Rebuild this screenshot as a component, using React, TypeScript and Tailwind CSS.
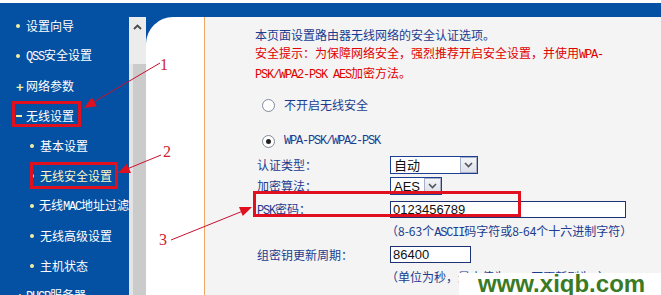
import type { ReactNode } from 'react';

// ASCII runs in the old router UI are drawn in a narrow monospace face
function M({ children }: { children: ReactNode }) {
  return <span className="font-['Liberation_Mono',monospace] text-[12px] tracking-[-1.2px]">{children}</span>;
}

type MenuItem = { mark: 'dot' | 'plus' | 'minus'; level: 0 | 1; text: ReactNode; active?: boolean };

const menu: MenuItem[] = [
  { mark: 'dot', level: 0, text: '设置向导' },
  { mark: 'dot', level: 0, text: <><M>QSS</M>安全设置</> },
  { mark: 'plus', level: 0, text: '网络参数' },
  { mark: 'minus', level: 0, text: '无线设置' },
  { mark: 'dot', level: 1, text: '基本设置' },
  { mark: 'dot', level: 1, text: '无线安全设置', active: true },
  { mark: 'dot', level: 1, text: <>无线<M>MAC</M>地址过滤</> },
  { mark: 'dot', level: 1, text: '无线高级设置' },
  { mark: 'dot', level: 1, text: '主机状态' },
  { mark: 'plus', level: 0, text: <><M>DHCP</M>服务器</> },
];

function Mark({ kind }: { kind: MenuItem['mark'] }) {
  if (kind === 'plus') return <span className="w-[10px] text-[13px] font-bold text-[#f3eea0] leading-none">+</span>;
  if (kind === 'minus') return <span className="w-[10px] flex items-center"><span className="w-[6px] h-[2px] bg-[#f3eea0]" /></span>;
  return (
    <span className="w-[10px] flex items-center">
      <span className="w-[4px] h-[4px] rounded-full bg-[#f3eea0]" />
    </span>
  );
}

function Sidebar() {
  return (
    <div className="w-[129px] shrink-0 bg-[#0450a2] overflow-hidden pt-[8px] pl-[16px]">
      {menu.map((item, i) => (
        <div
          key={i}
          className={`h-[30px] flex items-center whitespace-nowrap ${item.level === 1 ? 'pl-[14px]' : ''} ${item.active ? 'text-[#fff6c4]' : 'text-white'}`}
        >
          <Mark kind={item.mark} />
          <span className="text-[12px] leading-[14px]">{item.text}</span>
        </div>
      ))}
    </div>
  );
}

function Radio({ checked }: { checked?: boolean }) {
  return (
    <span className="w-[13px] h-[13px] rounded-full border border-[#7f8a9a] bg-white flex items-center justify-center">
      {checked && <span className="w-[5px] h-[5px] rounded-full bg-[#222]" />}
    </span>
  );
}

function Select({ value, width }: { value: string; width: string }) {
  return (
    <div className={`${width} h-[18px] border border-[#1c3f94] bg-white flex items-center justify-between`}>
      <span className="pl-[3px] text-[13px] leading-none text-[#111] font-['Liberation_Sans','Noto_Sans_CJK_SC',sans-serif]">{value}</span>
      <span className="w-[17px] h-[16px] border border-[#a6b0c8] bg-gradient-to-b from-[#f4f5f8] to-[#dde0e8] flex items-center justify-center">
        <svg width="9" height="6" viewBox="0 0 9 6">
          <path d="M1 1 L4.5 4.5 L8 1" fill="none" stroke="#4d5460" strokeWidth="1.6" />
        </svg>
      </span>
    </div>
  );
}

function Input({ value, width }: { value: string; width: string }) {
  return (
    <div className={`${width} h-[17px] border border-[#1c3272] bg-white flex items-center pl-[2px]`}>
      <span className="text-[13px] leading-none text-[#111] font-['Liberation_Sans',sans-serif]">{value}</span>
    </div>
  );
}

function Row({ label, children, className }: { label: ReactNode; children: ReactNode; className: string }) {
  return (
    <div className={`flex items-center ${className}`}>
      <span className="w-[135px] pl-[2px] text-[#1b3c8f]">{label}</span>
      {children}
    </div>
  );
}

function Content() {
  return (
    <div className="flex-1 bg-[#f4f4f4] pl-[50px] pt-[9px] text-[12px] leading-[18px] whitespace-nowrap">
      <p className="text-[#1b3c8f]">本页面设置路由器无线网络的安全认证选项。</p>
      <p className="text-[#e00000]">安全提示：为保障网络安全，强烈推荐开启安全设置，并使用<M>WPA-</M></p>
      <p className="text-[#e00000]"><M>PSK/WPA2-PSK AES</M>加密方法。</p>

      <div className="flex items-center h-[18px] mt-[12px] pl-[7px] gap-[9px] text-[#1b3c8f]">
        <Radio />
        <span>不开启无线安全</span>
      </div>
      <div className="flex items-center h-[18px] mt-[18px] pl-[7px] gap-[9px] text-[#1b3c8f]">
        <Radio checked />
        <M>WPA-PSK/WPA2-PSK</M>
      </div>

      <Row label="认证类型：" className="mt-[6px] h-[18px]">
        <Select value="自动" width="w-[88px]" />
      </Row>
      <Row label="加密算法：" className="mt-[3px] h-[18px]">
        <Select value="AES" width="w-[52px]" />
      </Row>
      <Row label={<><M>PSK</M>密码：</>} className="mt-[6px] h-[17px]">
        <Input value="0123456789" width="w-[236px]" />
      </Row>
      <p className="mt-[4px] pl-[131px] text-[#1b3c8f]">（8-63个<M>ASCII</M>码字符或8-64个十六进制字符）</p>
      <Row label="组密钥更新周期：" className="mt-[4px] h-[17px]">
        <Input value="86400" width="w-[81px]" />
      </Row>
      <p className="mt-[5px] pl-[131px] text-[#1b3c8f]">（单位为秒，最小值为30，不更新则为0）</p>
    </div>
  );
}

function Annotations() {
  const red = '#c8102e';
  return (
    <>
      <svg className="absolute inset-0 pointer-events-none" width="661" height="295" viewBox="0 0 661 295">
        <rect x="13.5" y="102.5" width="66" height="23" fill="none" stroke="#e0101e" strokeWidth="3" />
        <rect x="31.5" y="163.5" width="85" height="24" fill="none" stroke="#e0101e" strokeWidth="3" />
        <rect x="254.5" y="192.5" width="265" height="23" fill="none" stroke="#e0101e" strokeWidth="3" />
        <line x1="160" y1="63" x2="92" y2="103" stroke={red} strokeWidth="1" />
        <polygon points="84,108 96.9,106.2 91.8,97.6" fill="#e0101e" />
        <line x1="161" y1="155" x2="127" y2="169" stroke={red} strokeWidth="1" />
        <polygon points="118,173 131,172.9 127,163.7" fill="#e0101e" />
        <line x1="171" y1="240" x2="243" y2="211" stroke={red} strokeWidth="1" />
        <polygon points="252,207 242.8,216.1 239,206.9" fill="#e0101e" />
      </svg>
      <span className="absolute left-[160px] top-[56px] text-[16px] leading-[18px] text-[#d01c2c] font-['Liberation_Serif',serif]">1</span>
      <span className="absolute left-[163px] top-[143px] text-[16px] leading-[18px] text-[#d01c2c] font-['Liberation_Serif',serif]">2</span>
      <span className="absolute left-[159px] top-[231px] text-[16px] leading-[18px] text-[#d01c2c] font-['Liberation_Serif',serif]">3</span>
      <div className="absolute left-[459px] top-[273px] w-[202px] h-[22px] bg-white pl-[19px] flex items-center">
        <span className="text-[24px] leading-none font-bold text-[#3b7a24] font-['Liberation_Sans',sans-serif]">www.xiqb.com</span>
      </div>
    </>
  );
}

export default function App() {
  return (
    <div className="relative w-[661px] h-[295px] overflow-hidden bg-white flex flex-col font-['Noto_Sans_CJK_SC','Liberation_Sans',sans-serif]">
      <div className="h-[3px] shrink-0" />
      <div className="flex flex-1 min-h-0">
        <Sidebar />
        <div className="flex-1 flex flex-col min-w-0">
          <div className="h-[14px] shrink-0 bg-[#0450a2]" />
          <div className="flex flex-1 min-h-0">
            {/* scrollbar */}
            <div className="w-[17px] shrink-0 flex flex-col">
              <div className="h-[47px] bg-[#ececec] flex justify-center pt-[7px]">
                <svg width="9" height="6" viewBox="0 0 9 6">
                  <path d="M1 5 L4.5 1.5 L8 5" fill="none" stroke="#4a4a4a" strokeWidth="1.8" />
                </svg>
              </div>
              <div className="flex-1 bg-[#cbcbcb] border-l-[4px] border-[#e4e4e4]" />
            </div>
            {/* gutter with the rounded corner */}
            <div className="w-[58px] shrink-0 bg-[#0450a2]">
              <div className="h-full bg-white rounded-tl-[27px]" />
            </div>
            <div className="w-px shrink-0 bg-[#f0a868]" />
            <Content />
          </div>
        </div>
      </div>
      <Annotations />
    </div>
  );
}
